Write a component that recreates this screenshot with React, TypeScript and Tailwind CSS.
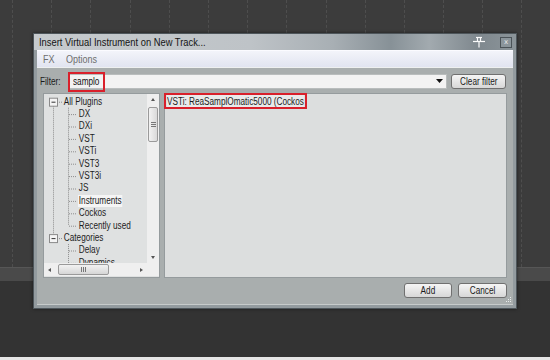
import React from 'react';

const sans = "font-['Liberation_Sans',Arial,sans-serif]";

// the screenshot's UI font is a narrow Tahoma-like face; squeeze Arial-width text to match
const N = ({ children, className = '', center = false }: { children: React.ReactNode; className?: string; center?: boolean }) => (
  <span className={`inline-block whitespace-nowrap scale-x-[0.82] ${center ? 'origin-center' : 'origin-left'} ${className}`}>
    {children}
  </span>
);

type TreeRow = { label: string; root?: boolean; highlight?: boolean };

const TREE: TreeRow[] = [
  { label: 'All Plugins', root: true },
  { label: 'DX' },
  { label: 'DXi' },
  { label: 'VST' },
  { label: 'VSTi' },
  { label: 'VST3' },
  { label: 'VST3i' },
  { label: 'JS' },
  { label: 'Instruments', highlight: true },
  { label: 'Cockos' },
  { label: 'Recently used' },
  { label: 'Categories', root: true },
  { label: 'Delay' },
  { label: 'Dynamics' },
];

const ROW = 12.4;
const TOP = 1.5;
const cy = (i: number) => TOP + ROW * i + ROW / 2;

// dotted connector lines + expand boxes of the tree view
const TreeLines = () => {
  const cat = 11;
  return (
    <svg className="absolute inset-0" width={104} height={169}>
      <g stroke="#8d8d8d" strokeWidth={1} strokeDasharray="1 1" fill="none">
        <line x1={9.5} y1={cy(0) + 4} x2={9.5} y2={cy(cat) - 4} />
        <line x1={13} y1={cy(0) + 0.5} x2={18} y2={cy(0) + 0.5} />
        <line x1={13} y1={cy(cat) + 0.5} x2={18} y2={cy(cat) + 0.5} />
        <line x1={24.5} y1={cy(0) + 6} x2={24.5} y2={cy(10)} />
        <line x1={24.5} y1={cy(cat) + 6} x2={24.5} y2={169} />
        {TREE.map((r, i) =>
          r.root ? null : <line key={i} x1={25} y1={cy(i) + 0.5} x2={33} y2={cy(i) + 0.5} />
        )}
      </g>
      {[0, cat].map((i) => (
        <g key={i}>
          <rect x={5.5} y={cy(i) - 3.5} width={8} height={8} fill="#f4f4f4" stroke="#8a8a8a" />
          <line x1={7.5} y1={cy(i) + 0.5} x2={11.5} y2={cy(i) + 0.5} stroke="#333" />
        </g>
      ))}
    </svg>
  );
};

const Arrow = ({ dir }: { dir: 'up' | 'down' | 'left' | 'right' }) => {
  const pts = {
    up: '2,5 4,2 6,5',
    down: '2,3 4,6 6,3',
    left: '5,2 2,4 5,6',
    right: '3,2 6,4 3,6',
  }[dir];
  return (
    <svg width={8} height={8}>
      <polygon points={pts} fill="#555" />
    </svg>
  );
};

const PluginTree = () => (
  <div className="w-[117px] h-full border border-[#959b9d] bg-[#dfe1e1] flex flex-col">
    <div className="flex h-[169px]">
      <div className="relative w-[104px] h-full overflow-hidden">
        <TreeLines />
        <div className={`relative pt-[1.5px] text-[10px] text-[#1c1c1c] ${sans}`}>
          {TREE.map((r) => (
            <div
              key={r.label}
              className={`h-[12.4px] flex items-center ${r.root ? 'pl-[19px]' : 'pl-[34px]'}`}
            >
              <N className={`px-[1px] leading-[12px] ${r.highlight ? 'bg-[#f5f5f5]' : ''}`}>{r.label}</N>
            </div>
          ))}
        </div>
      </div>
      <div className="w-[12px] h-full bg-[#efefef] flex flex-col items-center">
        <div className="h-[12px] flex items-center justify-center">
          <Arrow dir="up" />
        </div>
        <div className="mt-[1px] w-[10px] h-[35px] rounded-[2px] border border-[#9a9a9a] bg-[linear-gradient(90deg,#f2f2f2,#d9d9d9)] flex flex-col items-center justify-center gap-[1px]">
          <div className="w-[5px] h-px bg-[#777]" />
          <div className="w-[5px] h-px bg-[#777]" />
          <div className="w-[5px] h-px bg-[#777]" />
        </div>
        <div className="flex-1" />
        <div className="h-[12px] flex items-center justify-center">
          <Arrow dir="down" />
        </div>
      </div>
    </div>
    <div className="flex h-[13px] items-center bg-[#efefef]">
      <div className="w-[12px] flex items-center justify-center">
        <Arrow dir="left" />
      </div>
      <div className="ml-[2px] w-[51px] h-[11px] rounded-[2px] border border-[#9a9a9a] bg-[linear-gradient(180deg,#f2f2f2,#d6d6d6)] flex items-center justify-center gap-[1px]">
        <div className="w-px h-[5px] bg-[#777]" />
        <div className="w-px h-[5px] bg-[#777]" />
        <div className="w-px h-[5px] bg-[#777]" />
      </div>
      <div className="flex-1" />
      <div className="w-[12px] flex items-center justify-center">
        <Arrow dir="right" />
      </div>
      <div className="w-[12px]" />
    </div>
  </div>
);

const Button = ({ label, w }: { label: string; w: string }) => (
  <div
    className={`${w} h-[15px] rounded-[3px] border border-[#707070] bg-[linear-gradient(180deg,#f5f5f5,#e6e6e6_50%,#d7d7d7)] flex items-center justify-center text-[10px] text-[#1a1a1a] ${sans}`}
  >
    <N center>{label}</N>
  </div>
);

const TitleBar = () => (
  <div className="h-[16px] flex items-center bg-[linear-gradient(90deg,#c6cacd_0%,#bec3c7_45%,#a8afb4_62%,#879197_74%,#a2aaaf_82%,#7f888e_92%,#8b9499_100%)]">
    <span className={`pl-[5px] text-[11px] text-[#141414] ${sans}`}>
      <span className="inline-block whitespace-nowrap origin-left scale-x-[0.85]">Insert Virtual Instrument on New Track...</span>
    </span>
    <div className="flex-1" />
    <svg width={14} height={12} className="mr-[14px]">
      <g stroke="#fafafa" strokeWidth={1.2} fill="none">
        <line x1={4} y1={1.5} x2={10} y2={1.5} />
        <line x1={5.5} y1={1.5} x2={5.5} y2={5} />
        <line x1={8.5} y1={1.5} x2={8.5} y2={5} />
        <line x1={1} y1={5.5} x2={13} y2={5.5} />
        <line x1={7} y1={5.5} x2={7} y2={11.5} />
      </g>
    </svg>
    <div className="mr-[4px] w-[12px] h-[11px] border border-[#4b5358] bg-[#8b959b] flex items-center justify-center">
      <span className="text-[7px] leading-none text-[#e8e8e8] font-['DejaVu_Sans',sans-serif]">x</span>
    </div>
  </div>
);

export default function App() {
  return (
    <div className="relative w-[550px] h-[360px] overflow-hidden bg-[#333333]">
      {/* arrange view behind the dialog */}
      <div className="flex h-full">
        <div className="w-[10px] flex flex-col">
          <div className="h-[262px] bg-[#2d2d2d]" />
          <div className="flex-1 bg-[#ececec]" />
        </div>
        <div className="flex-1 flex flex-col">
          <div className="h-[267px] bg-[#3c3c3c] flex pl-[12px]">
            {Array.from({ length: 14 }).map((_, i) => (
              <div key={i} className="w-[39.2px] shrink-0 border-l border-dashed border-[#4e4e4e]" />
            ))}
          </div>
          <div className="h-[14px] bg-[#4a4a4a] border-t border-[#565656]" />
          <div className="flex-1 bg-[#333333]" />
          <div className="h-[3px] bg-[#e6e6e6]" />
        </div>
      </div>

      {/* dialog window */}
      <div className="absolute left-[33px] top-[33px] w-[484px] h-[276px] border border-[#4e565b] bg-[#939b9f] flex flex-col shadow-[0_0_3px_rgba(0,0,0,0.5)]">
        <TitleBar />
        <div className="flex-1 px-[3px] pb-[3px] flex flex-col">
          <div className={`h-[17px] border-t border-[#fbfbff] bg-[linear-gradient(180deg,#f3f4fa,#e1e4f0)] flex items-center gap-[9px] pl-[6px] text-[11px] text-[#6e6e6e] ${sans}`}>
            <N>FX</N>
            <N>Options</N>
          </div>
          <div className="relative flex-1 bg-[#a9aeae] border-t border-[#eef0f0] border-b border-b-[#c7cbcb] flex flex-col">
            <div className="mt-[6px] h-[15px] flex items-center pl-[3px] pr-[7px]">
              <span className={`w-[28px] text-[10px] text-[#1a1a1a] ${sans}`}>
                <N>Filter:</N>
              </span>
              <div className="relative flex-1 h-[15px] flex bg-[#f3f3f3] border border-[#b9bdbd]">
                <span className={`pl-[4px] text-[10px] leading-[13px] text-[#111] ${sans}`}>
                  <N>samplo</N>
                </span>
                <div className="flex-1" />
                <div className="w-[14px] flex items-center justify-center">
                  <svg width={7} height={5}>
                    <polygon points="0,0 7,0 3.5,4" fill="#111" />
                  </svg>
                </div>
                <div className="absolute left-[-1px] top-[-3px] w-[37px] h-[20px] border-[2.5px] border-[#d9202b]" />
              </div>
              <div className="w-[4px]" />
              <Button label="Clear filter" w="w-[55px]" />
            </div>
            <div className="mt-[4px] h-[185px] flex gap-[4px] pl-[6px] pr-[6px]">
              <PluginTree />
              <div className="relative flex-1 h-full border border-[#959b9d] bg-[#dcdede]">
                <div className={`pl-[2px] pt-[1px] text-[10px] leading-[13px] text-[#1c1c1c] ${sans}`}>
                  <N className="bg-[#e9eaea]">VSTi: ReaSamplOmatic5000 (Cockos</N>
                </div>
                <div className="absolute left-[-1px] top-[-1px] w-[143px] h-[16px] border-[2.5px] border-[#d9202b]" />
              </div>
            </div>
            <div className="mt-[5px] flex justify-end gap-[6px] pr-[6px]">
              <Button label="Add" w="w-[48px]" />
              <Button label="Cancel" w="w-[49px]" />
            </div>
            <svg className="absolute right-[1px] bottom-[1px]" width={6} height={6}>
              <g fill="#e8ecec">
                <rect x={4} y={0} width={1} height={1} />
                <rect x={2} y={2} width={1} height={1} />
                <rect x={4} y={2} width={1} height={1} />
                <rect x={0} y={4} width={1} height={1} />
                <rect x={2} y={4} width={1} height={1} />
                <rect x={4} y={4} width={1} height={1} />
              </g>
            </svg>
          </div>
        </div>
      </div>
    </div>
  );
}
